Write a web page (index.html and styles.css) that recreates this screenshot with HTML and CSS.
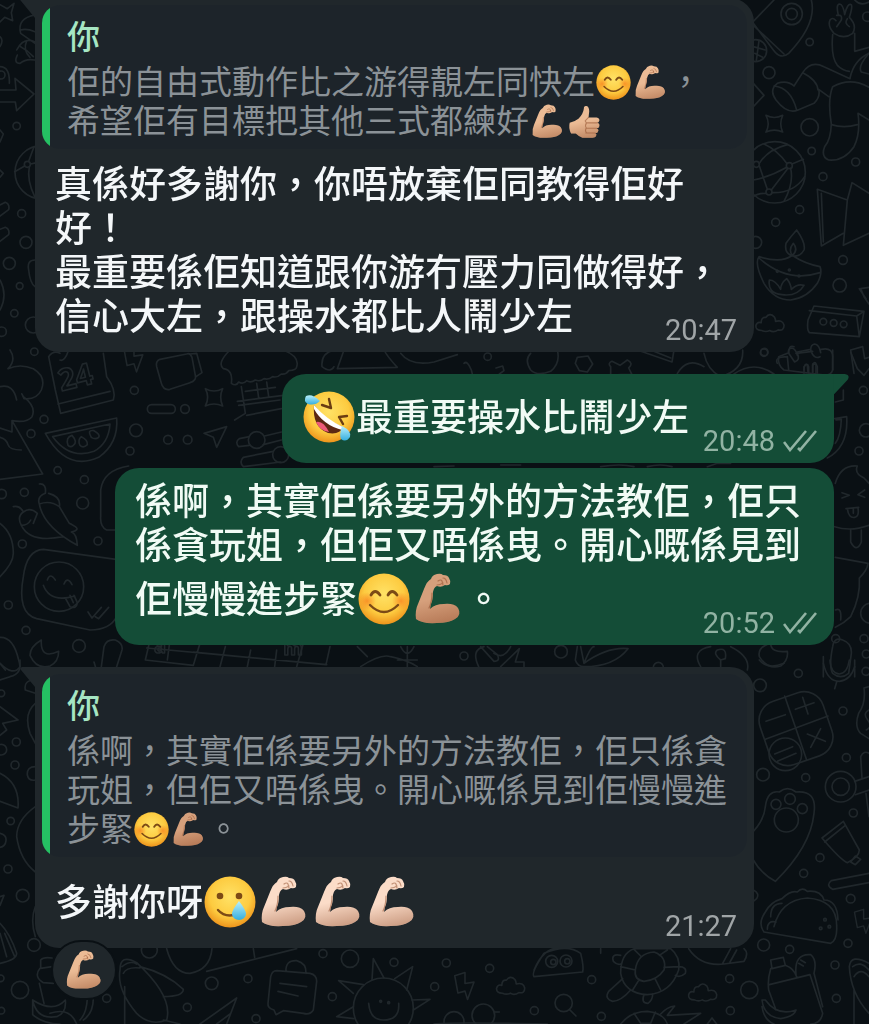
FILE: index.html
```html
<!DOCTYPE html>
<html lang="zh-Hant-HK">
<head>
  <meta charset="UTF-8" />
  <meta name="viewport" content="width=device-width, initial-scale=1" />
  <title>Chat</title>
  <link rel="stylesheet" href="styles.css">
</head>
<body>
  <!-- emoji and icon symbols -->
  <svg class="defs" width="0" height="0" aria-hidden="true">
    <defs>
      <radialGradient id="face" cx="0.5" cy="0.4" r="0.6">
        <stop offset="0" stop-color="#ffe266" />
        <stop offset="0.65" stop-color="#fdcb40" />
        <stop offset="1" stop-color="#ee941c" />
      </radialGradient>
      <radialGradient id="blush">
        <stop offset="0" stop-color="#f77a1c" stop-opacity="0.7" />
        <stop offset="1" stop-color="#f77a1c" stop-opacity="0" />
      </radialGradient>
      <linearGradient id="tear" x1="0" y1="0" x2="0" y2="1">
        <stop offset="0" stop-color="#b9f0fb" />
        <stop offset="1" stop-color="#35aede" />
      </linearGradient>
      <linearGradient id="shade" x1="0.3" y1="0" x2="0.5" y2="1">
        <stop offset="0.5" stop-color="#8a4524" stop-opacity="0" />
        <stop offset="1" stop-color="#8a4524" stop-opacity="0.4" />
      </linearGradient>
    </defs>
    <symbol id="smile" viewBox="0 0 52 52">
      <circle cx="26" cy="26" r="25.5" fill="url(#face)" />
      <circle cx="9" cy="28" r="9" fill="url(#blush)" />
      <circle cx="43" cy="28" r="9" fill="url(#blush)" />
      <path d="M13 22q4-7 9 0M30 22q4-7 9 0" fill="none" stroke="#7c4a16" stroke-width="2.8" stroke-linecap="round" />
      <path d="M12 32q14 14 28 0" fill="none" stroke="#7c4a16" stroke-width="2.4" stroke-linecap="round" />
    </symbol>
    <symbol id="rofl" viewBox="0 0 52 52">
      <circle cx="26" cy="26" r="25.5" fill="url(#face)" />
      <path d="M19 14l9 3-2-9M44 25l-8 1 4 7" fill="none" stroke="#6b3d12" stroke-width="2.4" stroke-linecap="round" stroke-linejoin="round" />
      <path d="M11 14Q23 30 40 36Q37 44 25 42Q9 36 11 14z" fill="#5c2813" />
      <path d="M13 31q7-2 13 10q-9-1-13-10z" fill="#ee5b78" />
      <path d="M11 14Q23 28 40 36l-1 3Q20 34 11 18z" fill="#fff" />
      <path d="M17 10Q12 15 5 13Q0 10 3 5Q9 2 17 10z" fill="url(#tear)" />
      <path d="M39 35Q49 40 47 46Q43 52 38 48Q36 44 39 35z" fill="url(#tear)" />
    </symbol>
    <symbol id="teary" viewBox="0 0 52 52">
      <circle cx="26" cy="26" r="25.5" fill="url(#face)" />
      <circle cx="16" cy="20" r="3.3" fill="#7c4a16" />
      <circle cx="35" cy="20" r="3.3" fill="#7c4a16" />
      <path d="M14 34q6 7 16 5" fill="none" stroke="#7c4a16" stroke-width="2.4" stroke-linecap="round" />
      <path d="M35 25q7 9 7 13a7 6 0 0 1-14 0q0-4 7-13z" fill="url(#tear)" />
    </symbol>
    <symbol id="biceps" viewBox="0 0 52 52">
      <path d="M4 46Q3 37 6 31L12 16Q15 8 19 6Q20 2 25 1Q29 0 31 2Q36 2 37 5Q39 8 38 11Q36 13 33 12Q29 15 25 13Q22 14 21 19Q21 27 19 31L18 36Q23 31 32 31Q42 30 46 35Q50 42 43 46Q37 50 25 50Q10 51 4 46z" fill="currentColor" />
      <path d="M4 46Q3 37 6 31L12 16Q15 8 19 6Q20 2 25 1Q29 0 31 2Q36 2 37 5Q39 8 38 11Q36 13 33 12Q29 15 25 13Q22 14 21 19Q21 27 19 31L18 36Q23 31 32 31Q42 30 46 35Q50 42 43 46Q37 50 25 50Q10 51 4 46z" fill="url(#shade)" />
      <path d="M26 8q3-2 4 0l1 4M31 5q3 0 4 5M25 12q3 0 6-2M20 20q0 9-3 15" fill="none" stroke="#8a4524" stroke-opacity="0.5" stroke-width="1.2" stroke-linecap="round" />
    </symbol>
    <symbol id="thumb" viewBox="0 0 52 52">
      <path d="M4 28Q12 26 17 22Q24 15 25 7Q25 2 29 3Q33 4 33 11L32 20H44Q49 21 48 25Q47 28 45 28Q49 29 48 33Q48 36 44 36Q48 38 46 41Q45 44 42 43Q45 45 43 48Q42 50 38 50H23Q17 48 13 44H6Q2 36 4 28z" fill="currentColor" />
      <path d="M4 28Q12 26 17 22Q24 15 25 7Q25 2 29 3Q33 4 33 11L32 20H44Q49 21 48 25Q47 28 45 28Q49 29 48 33Q48 36 44 36Q48 38 46 41Q45 44 42 43Q45 45 43 48Q42 50 38 50H23Q17 48 13 44H6Q2 36 4 28z" fill="url(#shade)" />
      <path d="M32 20l-5 5M29 28h16M28 36h16M28 43h14M29 23q-3 3 0 5q-3 4 0 8q-3 3 0 7" fill="none" stroke="#8a4524" stroke-opacity="0.5" stroke-width="1.6" stroke-linecap="round" />
    </symbol>
    <symbol id="ticks" viewBox="0 0 34 22">
      <path d="M1 12l6 8L23 1M15 18l2 2L33 1" fill="none" stroke="currentColor" stroke-width="2.6" />
    </symbol>
    <symbol id="tail-left" viewBox="0 0 16 20">
      <path d="M16 0H2Q-1 1 1 3L15 20H16z" fill="currentColor" />
    </symbol>
    <symbol id="tail-right" viewBox="0 0 16 21">
      <path d="M0 0H12Q18 1 15 6L1 21H0z" fill="currentColor" />
    </symbol>
    <symbol id="bolt" viewBox="0 0 70 100" overflow="visible">
      <path d="M4 18L36 8 36 42 64 38 44 92 36 66 14 72z" />
    </symbol>
    <symbol id="cloud" viewBox="0 0 100 70" overflow="visible">
      <path d="M24 56Q4 56 6 40Q10 28 22 32Q22 14 36 16Q48 0 62 14Q66 20 66 28Q88 22 92 40Q92 58 74 54Q60 64 48 56Q36 62 24 56z" />
    </symbol>
    <symbol id="spark" viewBox="0 0 60 60" overflow="visible">
      <path d="M4 4Q30 18 56 4Q44 30 56 56Q30 44 4 56Q18 30 4 4z" />
    </symbol>
  </svg>

  <!-- wallpaper doodles -->
  <svg class="wallpaper" viewBox="0 0 2607 3072" preserveAspectRatio="xMidYMin slice" aria-hidden="true">
    <!-- left edge, top -->
    <g>
      <path d="M0 14L22 26 42 10 34 38 38 62 14 52 0 66" />
      <path d="M105 45Q50 55 62 100L105 130M62 90Q80 85 105 95M50 150Q70 110 104 125M52 165Q40 190 60 190Q78 175 104 180M62 140q20 10 38 30M80 122q-12 30 10 50" />
      <path d="M0 200Q30 200 28 250M0 110Q12 120 0 140M0 270H48L45 235 102 282 50 332 46 306H0" />
      <circle cx="3" cy="225" r="12" />
      <path d="M0 390l10 12-10 24M0 510l10 10-10 12" />
      <circle cx="50" cy="378" r="11" />
      <circle cx="125" cy="517" r="80" />
      <circle cx="82" cy="493" r="9" />
      <path d="M74 498L44 515M86 484L102 440M88 500Q80 540 104 590M92 492L110 488" />
      <path d="M0 615l16-8q14 6 10 22L0 648M0 688l16-6q14 6 10 22L0 724" />
      <circle cx="65" cy="641" r="12" /><circle cx="78" cy="727" r="18" />
      <circle cx="28" cy="790" r="18" /><circle cx="59" cy="858" r="10" />
      <circle cx="43" cy="940" r="11" /><circle cx="5" cy="995" r="14" />
      <circle cx="103" cy="1055" r="11" /><circle cx="100" cy="975" r="24" />
      <path d="M0 840Q24 885 0 930M105 780Q80 780 86 810Q90 850 105 860" />
    </g>
    <!-- right edge, top -->
    <g transform="translate(1302 0)">
      <path d="M958 64L1020 0M958 70L1018 150Q1040 180 1064 160Q1150 70 1132 0M958 76L1050 162" />
      <circle cx="1073" cy="42" r="32" /><circle cx="1073" cy="42" r="17" />
      <circle cx="965" cy="152" r="33" /><path d="M958 140l36 10M962 160l24 12M975 122l-8 60" />
      <circle cx="1127" cy="126" r="11" /><circle cx="1005" cy="218" r="18" />
      <path d="M1213 46Q1205 12 1217 12Q1228 14 1232 44Q1240 8 1252 14Q1256 22 1246 52Q1270 76 1256 100Q1230 120 1200 100Q1180 78 1188 60Q1196 50 1206 62M1208 46q18-4 14 14l-14 20M1240 56q-10 14 6 24M1196 104Q1190 170 1210 196Q1226 212 1246 214M1262 100L1262 154L1305 142M1248 234Q1260 180 1305 160" />
      <path d="M1248 236L1170 200Q1130 180 1106 218L1080 258Q1060 240 1030 250Q1004 270 1026 300Q1060 344 1092 330L1140 310Q1160 290 1154 268L1184 290M1106 218Q1150 240 1152 270M1020 258Q1070 262 1088 330M1305 262Q1250 230 1196 260Q1180 300 1192 372Q1190 420 1172 440Q1160 470 1184 480Q1230 484 1260 440Q1280 400 1272 340L1305 360M1192 374Q1230 386 1270 374M1305 160Q1270 200 1282 216L1305 222" />
      <circle cx="1300" cy="50" r="14" /><path d="M1262 0Q1280 20 1305 6M958 320L990 286 958 250" />
      <use href="#spark" x="992" y="342" width="58" height="58" />
      <circle cx="1127" cy="382" r="26" /><circle cx="1133" cy="453" r="11" />
      <circle cx="1265" cy="486" r="12" /><circle cx="1167" cy="530" r="12" />
      <circle cx="1097" cy="629" r="12" /><circle cx="1025" cy="667" r="12" />
      <circle cx="1022" cy="517" r="92" />
      <circle cx="1066" cy="497" r="9" /><circle cx="1005" cy="576" r="9" /><circle cx="967" cy="493" r="9" />
      <path d="M976 490Q1000 450 1060 434M976 498L1000 568M1074 492L1108 478M1062 505L1012 570M1058 490Q1030 450 990 432M958 540Q1010 530 1058 502M1014 578Q1080 580 1112 530M996 580Q970 580 958 590M1070 505Q1080 550 1050 604" />
      <path d="M1150 568L1240 600 1228 736 1305 700M1150 568L1162 738 1228 700M1162 580L1168 726M1240 600L1254 548 1305 580" />
      <path d="M1075 768Q1050 760 1056 730Q1070 710 1088 690Q1116 730 1110 750Q1100 770 1075 768zM1075 766Q1062 750 1078 730Q1094 750 1075 766M1072 768Q1040 790 975 770Q960 790 990 850Q1020 900 1070 900Q1120 894 1150 850Q1166 820 1158 800Q1110 790 1078 768M975 774Q1060 850 1158 818M1006 840Q1000 880 1044 884Q1090 890 1110 856Q1090 850 1072 868Q1070 850 1058 836Q1040 850 1040 868Q1024 840 1006 840z" />
      <circle cx="1030" cy="814" r="3" /><circle cx="1066" cy="810" r="3" /><circle cx="1095" cy="828" r="3" />
      <circle cx="965" cy="727" r="18" /><circle cx="1227" cy="780" r="13" /><circle cx="1217" cy="856" r="20" />
      <use href="#cloud" x="960" y="936" width="98" height="70" />
      <path d="M1140 918L1290 934 1276 1010 1126 998Q1118 990 1122 960zM1126 932L1268 948 1276 1010M1268 948L1290 934" />
      <circle cx="1168" cy="965" r="10" /><circle cx="1199" cy="969" r="10" /><circle cx="1229" cy="973" r="10" />
      <path d="M1305 862L1280 866 1290 890 1305 912M1276 866l20 30" />
      <circle cx="991" cy="1056" r="11" />
      <path d="M1064 1060q-4-14 10-16q12 4 16 22M1090 1056l40-8M1130 1050q0-16 12-18q14 2 18 26M1090 1060Q1100 1080 1082 1086L1064 1060M1162 1048Q1200 1040 1196 1080V1110Q1190 1130 1160 1124L1050 1110Q1030 1096 1034 1070L1064 1058M1110 1110q0-20 10-16l2 24M1136 1116v-24q8-8 10 0v26" />
      <path d="M1250 1050l36-10 6 36 13-4M1250 1050l10 70" />
    </g>
    <!-- left, middle -->
    <g transform="translate(0 1050)">
      <path d="M30 0Q50 30 24 56Q60 40 100 56Q140 80 124 120Q110 150 72 146Q60 120 70 140Q110 170 96 200Q80 220 36 212L128 372L0 388M0 110Q40 100 50 150M36 212V246L0 234M0 262q20 6 24 22t40 16" />
      <path d="M146 20L166 120 182 190 340 150Q350 120 320 80L310 10M146 20Q160 0 180 10M174 162L330 124M180 30q14 6 26-30" />
      <text class="doodle-text" x="184" y="124" font-size="90" transform="rotate(-14 184 124)">24</text>
      <use href="#bolt" x="368" y="-22" width="66" height="96" />
      <path d="M470 50Q466 34 480 28L560 12Q570 8 576 22L586 76Q590 92 570 98L510 118Q490 122 484 100zM570 12L590 10 606 68 588 80" />
      <circle cx="403" cy="121" r="12" /><circle cx="132" cy="208" r="12" /><circle cx="93" cy="251" r="12" />
      <rect x="442" y="164" width="84" height="26" rx="13" /><circle cx="555" cy="177" r="13" />
      <use href="#spark" x="612" y="112" width="60" height="60" />
      <path d="M136 250L350 204Q356 280 296 322Q200 366 136 250zM158 260L330 222Q326 280 282 304Q210 330 158 260M204 286q-8-24 12-30q18 20 4 30q-8 8-16 0zM240 286q-8-16 4-26q20 10 18 24q-12 12-22 2zM274 262q-14-24 8-20q20 12 14 20q-10 8-22 0z" />
      <circle cx="408" cy="241" r="19" /><circle cx="504" cy="269" r="13" /><circle cx="563" cy="269" r="13" />
      <path d="M612 250L680 230 650 292 640 262z" />
      <circle cx="390" cy="303" r="12" /><circle cx="173" cy="361" r="11" /><circle cx="253" cy="389" r="12" />
      <path d="M690 0Q650 40 670 56Q700 60 694 100q14 10 22-4q14 8 24-4q12 8 26-2q14 6 26-4q14 4 26-6q14 4 26-8q14 2 22-10q24-2 24-12Q900 20 850 0M712 154L850 136M716 166L840 150M724 110l12 80L704 210M740 196L844 176M770 100l6 44M800 96l6 44M736 124l90-12" />
      <circle cx="770" cy="270" r="25" /><path d="M748 260L718 266Q704 276 716 290L748 286M794 258L844 246M790 284L844 270M820 304L730 322Q716 336 730 350L842 336" /><circle cx="842" cy="314" r="24" />
      <circle cx="73" cy="427" r="12" /><circle cx="248" cy="459" r="18" /><circle cx="294" cy="573" r="12" /><circle cx="67" cy="582" r="12" />
      <circle cx="5" cy="432" r="14" />
      <path d="M118 402Q140 400 136 430Q110 440 118 462Q150 450 178 470Q184 440 146 430M118 462Q130 530 232 586Q230 550 214 546Q240 540 226 530Q210 520 208 520Q190 490 178 470M40 470Q60 466 70 486Q50 500 64 526Q90 580 190 560M70 486Q90 470 112 490L100 520M64 526q20 0 28-16" />
      <path d="M350 540H320Q300 530 302 500V420Q310 360 386 348M0 520Q40 550 40 610Q40 640 0 680" />
      <path d="M348 628L130 598Q80 600 70 680Q50 790 110 806L270 840Q330 840 350 800" />
      <circle cx="177" cy="710" r="74" />
      <path d="M142 690q8-24 24 0M192 702q10-24 24 2M130 706Q150 760 224 738M196 744l14 26q20 8 22-12l-10-22M210 736l10 22M264 786l12 18 28-32M286 800l10 6 30-34" />
      <circle cx="25" cy="765" r="12" /><circle cx="78" cy="841" r="12" /><circle cx="237" cy="888" r="19" />
      <path d="M124 870Q90 890 90 916Q110 960 150 948Q176 936 176 904Q120 930 124 870zM0 862Q40 860 56 930Q70 970 30 980L0 990M0 940l16 20" />
      <path d="M304 950L312 890Q320 866 346 870Q370 880 366 900L350 950M282 936l6 20M450 870L436 930 580 946M510 870l-8 60M600 880L580 946M676 890L660 950M752 900L742 950M830 900L824 950M910 880L890 950M990 890L978 944L580 906M440 894L980 944" />
      <text class="doodle-text" x="462" y="910" font-size="60">a</text>
      <text class="doodle-text" x="850" y="916" font-size="60">m</text>
    </g>
    <!-- right, middle -->
    <g transform="translate(1302 1050)">
      <path d="M-300 0Q-340 10-336 50Q-310 70-300 50M-290 56L-270 0M-290 56L-110 52Q-140 20-150 0M-100 10Q-70 50 0 36L70 14M90 40Q100 30 112 60L116 76M186 54l20-6 4 14-14 10M290 10Q270 30 290 60Q310 80 350 64Q380 40 370 0M430 22L462 18 476 42 460 66 436 62 424 40zM530 50Q520 40 534 34L558 46L580 30Q600 40 584 54L594 74H560L530 76zM610 0L714 36L720 0M650 0l60 24" />
      <circle cx="161" cy="20" r="11" /><circle cx="990" cy="8" r="11" />
      <path d="M730 70Q760 20 810 50M810 10Q820 60 860 80Q930 60 926 0M900 72Q960 30 1020 72M1030 40Q1020 20 1060 20L1064 60M1064 10q0-26 16-20M1086 10l50-6M1130 0q10 30 28 20M1196 0V60M1110 70V50q10-14 14 0v20M1136 70V46q10-10 14 4v20" />
      <circle cx="1288" cy="121" r="12" /><circle cx="1296" cy="241" r="20" /><circle cx="1275" cy="303" r="12" />
      <path d="M1250 6l20 50 20 20 15-20M1204 156l24-6V120M1202 206L1238 200Q1244 290 1180 324M1206 210L1222 208Q1220 260 1204 280" />
      <path d="M1204 400Q1220 344 1270 348Q1260 370 1290 384L1305 400M1202 530Q1250 546 1305 526M1250 540V576Q1268 610 1282 576V540M1224 428l22 8-22 8M1292 420l-20 14 20 8M1236 476l38-4M1240 476Q1244 506 1262 502Q1276 500 1272 474M1258 474v16" />
      <path d="M1204 622L1302 640M1302 640Q1300 660 1276 684Q1280 740 1250 800Q1230 820 1204 832M1204 780q20-10 16 30" />
      <circle cx="1310" cy="790" r="30" />
      <circle cx="90" cy="918" r="12" /><circle cx="381" cy="905" r="19" /><circle cx="673" cy="952" r="15" /><circle cx="1205" cy="866" r="12" /><circle cx="1290" cy="866" r="12" />
      <path d="M150 890Q110 900 134 950M140 890l40 44q20 0 10-20l-30-24M180 910q30 20 50-20M200 950L256 896 244 936H270V950M430 890L424 930Q430 950 450 950Q540 950 582 896Q520 890 450 940Q470 890 480 890M440 890L450 940M800 950Q770 900 830 890M860 950V930Q836 910 850 900Q880 890 874 926L860 930M890 890Q950 920 940 960" />
      <path d="M1010 880Q970 890 976 920Q1000 960 1040 948Q1064 930 1060 904Q1010 910 1010 880zM1196 890Q1200 860 1226 870Q1254 880 1252 910L1244 970Q1220 990 1196 970Q1184 950 1196 890zM1168 920V980M1262 930V980" />
      <circle cx="1297" cy="912" r="12" />
      <path d="M-230 890L-200 920M-220 950Q-160 910-130 920Q-80 930-50 950M-100 890q20 40 40 0M-80 890v60M-110 930h60" />
      <path d="M0 350l60-2M500 350q60-10 100 0M640 350q40-10 74 0M820 350l30-10h40M200 345h60" />
    </g>
    <!-- left, bottom -->
    <g transform="translate(0 1980)">
      <path d="M0 10Q40 50 60 20V0M0 140L54 180 8 190 20 210 0 226M106 60Q70 60 76 90L106 100" />
      <circle cx="4" cy="100" r="10" /><circle cx="49" cy="246" r="12" /><circle cx="4" cy="269" r="16" /><circle cx="45" cy="315" r="12" />
      <path d="M106 130Q70 160 90 220L106 250M106 320Q80 320 82 345Q86 364 106 360M0 340Q60 370 54 444L0 424M106 440Q50 480 50 530Q60 600 106 636M0 520q20 4 18 22t-18 20" />
      <circle cx="32" cy="483" r="11" /><circle cx="24" cy="627" r="12" /><circle cx="68" cy="707" r="19" /><circle cx="102" cy="855" r="19" />
      <path d="M0 710L12 706 0 736M106 740Q90 780 106 830M0 790Q30 820 50 880Q50 900 0 910M0 820L20 890M14 820L44 890" />
      <circle cx="60" cy="990" r="26" /><circle cx="2" cy="955" r="10" /><circle cx="4" cy="1052" r="10" /><circle cx="320" cy="1015" r="12" />
      <path d="M122 900Q130 890 156 894M122 900V925L156 920M120 925Q100 950 130 968L160 970M118 970L132 1030M98 1020Q110 1080 170 1070Q200 1060 196 1020Q160 1060 98 1020zM98 1020V1064Q130 1092 180 1092M150 1060Q210 1040 230 1092M262 1015Q260 1060 240 1080M280 1015Q280 1060 250 1080" />
      <path d="M360 930Q360 880 410 908Q520 1010 500 1080Q450 1100 410 1060Q350 990 360 930zM366 920Q390 900 410 912M370 940Q380 920 420 924M420 920Q500 940 550 988Q550 1010 490 1010M374 980V1092M490 1080l50 12" />
      <circle cx="448" cy="870" r="24" /><circle cx="635" cy="970" r="19" /><circle cx="744" cy="956" r="12" /><circle cx="562" cy="1042" r="12" />
      <path d="M500 866Q520 940 570 940Q630 930 636 866M620 934L890 866M760 866l4 26M600 1092L710 1014 680 1092M650 1092l40-30" />
      <path d="M830 932L930 940Q950 944 950 964L940 1050Q930 1066 910 1060L850 1052 828 1064 822 1050Q802 1044 804 1030L812 950Q816 932 830 932zM858 934Q856 900 890 902Q920 910 918 940M840 970l80 10M834 994l60 14" />
      <circle cx="969" cy="881" r="12" /><circle cx="1050" cy="896" r="26" /><circle cx="1182" cy="907" r="12" /><circle cx="997" cy="1010" r="12" /><circle cx="768" cy="1076" r="12" />
      <circle cx="1150" cy="1044" r="90" />
      <path d="M1116 960L1120 896 1152 954M1184 956L1238 920 1220 990M1060 1000L1016 962 1090 974M1236 1020L1290 1018 1240 1050M1060 1040L1010 1070 1062 1076M1106 1030Q1110 1080 1150 1080Q1200 1080 1196 1030" />
      <circle cx="1142" cy="1024" r="3" /><circle cx="1166" cy="1028" r="3" />
    </g>
    <!-- right, bottom -->
    <g transform="translate(1302 1980)">
      <circle cx="978" cy="76" r="19" /><circle cx="1093" cy="40" r="12" /><circle cx="1227" cy="153" r="12" /><circle cx="1296" cy="34" r="12" />
      <path d="M1168 10Q1180 64 1216 64Q1250 60 1262 20M1208 66l-6 20M1188 0Q1190 40 1216 42Q1240 40 1246 0M976 0Q1000 30 1050 10" />
      <rect x="986" y="106" width="200" height="200" rx="60" transform="rotate(-19 1086 206)" />
      <path d="M1052 108L1118 300M994 238L1182 168M996 184l58-20M1084 148l56-20M1106 112l16 50M1120 222l54 22M1160 206l-30 56M1022 282l54-22M1030 304l56-24" />
      <circle cx="1054" cy="283" r="49" />
      <circle cx="1237" cy="293" r="12" /><circle cx="1115" cy="353" r="12" /><circle cx="987" cy="344" r="19" />
      <path d="M1305 80L1290 84Q1296 130 1274 160Q1260 200 1280 220L1305 236M1305 150q-20 10-4 30t-4 30" />
      <circle cx="1220" cy="380" r="46" /><circle cx="1220" cy="380" r="26" /><path d="M1262 364L1305 350M1264 404L1305 390M1284 354L1280 290Q1290 270 1305 280M1296 400L1305 470" />
      <path d="M958 514Q990 480 994 440Q1000 390 1036 396Q1060 376 1086 396Q1150 390 1140 460Q1130 560 1024 664Q980 640 958 600" />
      <circle cx="1026" cy="433" r="15" /><circle cx="1068" cy="417" r="16" /><circle cx="1105" cy="446" r="15" /><circle cx="1057" cy="480" r="36" />
      <path d="M1164 534L1228 484 1276 570Q1276 590 1240 608Q1220 600 1164 534zM1172 546L1234 496M1250 606L1264 588 1280 598 1264 614z" />
      <circle cx="1258" cy="459" r="12" /><circle cx="1158" cy="593" r="12" /><circle cx="1109" cy="640" r="12" /><circle cx="1250" cy="716" r="13" />
      <path d="M1305 640L1192 662Q1174 676 1196 688L1305 668M958 690q20 10 10 26l-10 8" />
      <path d="M1020 800Q1040 720 1120 714Q1210 720 1208 800Q1210 840 1190 850L990 816Q970 790 994 756Q1010 726 1044 716Q1070 690 1090 696Q1104 680 1120 694Q1160 690 1170 720Q1210 720 1212 780M1000 808Q1000 780 1026 786M1010 770Q1010 730 1044 730" />
      <circle cx="1173" cy="779" r="4" /><circle cx="1160" cy="805" r="4" /><circle cx="1186" cy="800" r="4" />
      <circle cx="989" cy="855" r="18" /><circle cx="1067" cy="868" r="12" /><circle cx="1242" cy="850" r="12" /><circle cx="1203" cy="915" r="12" />
      <use href="#bolt" x="1258" y="740" width="60" height="88" />
      <path d="M764 866Q800 920 870 912L930 904Q946 880 930 866M890 866l-24 44M908 870l-20 36" />
      <path d="M300 950Q290 940 330 880Q400 850 440 880Q450 920 446 936zM300 930Q330 860 380 864" />
      <circle cx="353" cy="904" r="18" /><circle cx="396" cy="903" r="18" /><circle cx="358" cy="906" r="8" /><circle cx="400" cy="904" r="8" />
      <circle cx="37" cy="909" r="12" /><circle cx="167" cy="925" r="12" /><circle cx="2" cy="980" r="12" /><circle cx="473" cy="959" r="12" /><circle cx="301" cy="1052" r="12" /><circle cx="502" cy="1069" r="12" />
      <use href="#bolt" x="58" y="930" width="68" height="96" />
      <use href="#cloud" x="182" y="944" width="98" height="70" />
      <circle cx="389" cy="1029" r="26" /><path d="M406 1048l20 20" />
      <circle cx="60" cy="1085" r="30" /><circle cx="148" cy="1066" r="34" /><path d="M182 1056h14" />
      <path d="M560 940Q560 880 600 866H710Q740 890 734 930Q710 1000 640 1004Q570 1000 560 940zM604 930Q610 880 660 876Q700 890 690 930Q670 960 630 964Q600 960 604 930zM560 920l44 10M600 868l20 20M700 870l-24 16M734 920l-44 2M664 958l16 32M616 958l-20 32M560 886Q530 880 538 904Q550 916 560 912M734 920q26 0 20 20q-16 14-30 6M566 956L524 994Q510 1016 536 1024Q560 1024 590 990M630 1004q-10 26 12 26q14-10 14-28" />
      <use href="#cloud" x="758" y="964" width="98" height="70" />
      <circle cx="887" cy="956" r="12" /><circle cx="946" cy="990" r="26" /><circle cx="889" cy="1052" r="12" /><circle cx="1207" cy="1015" r="12" />
      <path d="M560 1092Q590 1054 640 1054Q690 1060 700 1092M600 1060l20 30h30l14-34M680 1062Q700 1040 722 1038L700 1066L800 1060L750 1092M820 1092l14-18 14 18" />
      <path d="M1010 900L1048 892 1054 916 1014 926zM1010 926Q1000 960 1004 990L1026 1050M1054 916Q1080 926 1088 950M1006 974L1128 944L1166 1060Q1160 1092 1130 1092M1140 940L1166 1040M1086 944Q1080 880 1130 884Q1150 900 1140 940M1094 910l14 8M1100 900l14 8M984 1020Q990 1070 1040 1076Q1080 1070 1086 1050Q1030 1070 994 1020zM984 1040Q990 1080 1020 1092" />
      <path d="M1305 910Q1250 880 1246 920Q1250 1000 1305 1060M1256 920Q1280 900 1305 930M1260 950Q1280 920 1305 950M1260 990V1092" />
      <path d="M0 1092q40-6 340 0M500 866v14" />
    </g>
  </svg>

  <main class="chat">
    <article class="message received first">
      <svg class="tail" aria-hidden="true"><use href="#tail-left" /></svg>
      <blockquote class="quote">
        <div class="quote-name">你</div>
        <p>佢的自由式動作比之游得靚左同快左<svg class="emoji" role="img" aria-label="😊"><use href="#smile" /></svg><svg class="emoji tan" role="img" aria-label="💪🏼"><use href="#biceps" /></svg>，<br>希望佢有目標把其他三式都練好<svg class="emoji tan" role="img" aria-label="💪🏼"><use href="#biceps" /></svg><svg class="emoji tan" role="img" aria-label="👍🏼"><use href="#thumb" /></svg></p>
      </blockquote>
      <p class="text">真係好多謝你，你唔放棄佢同教得佢好好！<br>最重要係佢知道跟你游冇壓力同做得好，信心大左，跟操水都比人鬧少左</p>
      <div class="meta"><time>20:47</time></div>
    </article>

    <article class="message sent first">
      <svg class="tail" aria-hidden="true"><use href="#tail-right" /></svg>
      <p class="text"><svg class="emoji" role="img" aria-label="🤣"><use href="#rofl" /></svg>最重要操水比鬧少左</p>
      <div class="meta"><time>20:48</time><svg class="ticks" role="img" aria-label="Delivered"><use href="#ticks" /></svg></div>
    </article>

    <article class="message sent">
      <p class="text">係啊，其實佢係要另外的方法教佢，佢只係貪玩姐，但佢又唔係曳。開心嘅係見到佢慢慢進步緊<svg class="emoji" role="img" aria-label="😊"><use href="#smile" /></svg><svg class="emoji brown" role="img" aria-label="💪🏽"><use href="#biceps" /></svg>。</p>
      <div class="meta"><time>20:52</time><svg class="ticks" role="img" aria-label="Delivered"><use href="#ticks" /></svg></div>
    </article>

    <article class="message received first">
      <svg class="tail" aria-hidden="true"><use href="#tail-left" /></svg>
      <blockquote class="quote">
        <div class="quote-name">你</div>
        <p>係啊，其實佢係要另外的方法教佢，佢只係貪玩姐，但佢又唔係曳。開心嘅係見到佢慢慢進步緊<svg class="emoji" role="img" aria-label="😊"><use href="#smile" /></svg><svg class="emoji brown" role="img" aria-label="💪🏽"><use href="#biceps" /></svg>。</p>
      </blockquote>
      <p class="text">多謝你呀<svg class="emoji" role="img" aria-label="🥲"><use href="#teary" /></svg><svg class="emoji light" role="img" aria-label="💪🏻"><use href="#biceps" /></svg><svg class="emoji light" role="img" aria-label="💪🏻"><use href="#biceps" /></svg><svg class="emoji light" role="img" aria-label="💪🏻"><use href="#biceps" /></svg></p>
      <div class="meta"><time>21:27</time></div>
    </article>
    <button class="reaction" type="button" aria-label="💪🏼"><svg class="emoji tan" aria-hidden="true"><use href="#biceps" /></svg></button>
  </main>
</body>
</html>
```

FILE: styles.css
```css
* {
  box-sizing: border-box;
}

body {
  margin: 0;
  min-height: 100vh;
  background-color: #0a1014;
  color: #f4f7f9;
  font-family: "Noto Sans CJK TC", sans-serif;
}

p,
blockquote {
  margin: 0;
}

.defs {
  position: absolute;
}

.wallpaper {
  position: fixed;
  top: 0;
  left: 0;
  width: 100%;
  height: 100%;
  fill: none;
  stroke: #20272b;
  stroke-width: 5;
  stroke-linejoin: round;
  stroke-linecap: round;
}

.doodle-text {
  font-family: "Open Sans", sans-serif;
  font-weight: 700;
}

.chat {
  position: relative;
  display: flex;
  flex-direction: column;
  align-items: flex-start;
  margin-top: -2px;
  padding: 0 35px;
}

/* bubbles */
.message {
  position: relative;
  display: flex;
  flex-direction: column;
  max-width: 90%;
  margin-top: 5px;
  padding-bottom: 7px;
  border-radius: 24px;
}

.message.first {
  margin-top: 22px;
}

.message:first-child {
  margin-top: 0;
}

.received {
  background-color: #20272b;
  color: #f4f7f9;
}

.sent {
  align-self: flex-end;
  background-color: #144d37;
  color: #f1fbf5;
}

.received.first {
  border-top-left-radius: 0;
}

.sent.first {
  border-top-right-radius: 0;
}

/* overlaps the bubble by 1px so no seam shows */
.tail {
  position: absolute;
  top: 0;
  width: 16px;
  height: 20px;
}

.received .tail {
  right: 100%;
  margin-right: -1px;
  color: #20272b;
}

.sent .tail {
  left: 100%;
  margin-left: -1px;
  color: #144d37;
}

.text {
  padding: 9px 17px 2px 20px;
  font-size: 37px;
  font-weight: 500;
  line-height: 44px;
}

.quote + .text {
  padding-top: 11px;
}

/* keeps room for the time on the last line */
.text::after {
  content: "";
  display: inline-block;
  width: 88px;
}

.sent .text::after {
  width: 128px;
}

.text .emoji {
  width: 52px;
  height: 52px;
  margin: 8px 1px 4px;
  vertical-align: -16px;
}

.meta {
  display: flex;
  align-items: center;
  align-self: flex-end;
  gap: 8px;
  margin-top: -23px;
  padding-right: 17px;
  color: #a0a5a7;
  font-family: Roboto, sans-serif;
  font-size: 29px;
  line-height: 30px;
}

.sent .meta {
  color: #91b3a3;
}

.ticks {
  width: 34px;
  height: 22px;
}

/* quoted message */
.quote {
  margin: 7px 7px 0;
  padding: 8px 10px 10px 25px;
  border-radius: 18px;
  background: linear-gradient(to right, #25c063 8px, #1d242a 8px);
  color: #8b9297;
  font-size: 33px;
  line-height: 39px;
}

.quote-name {
  margin-bottom: 4px;
  color: #a6e6c3;
  font-weight: 500;
  line-height: 44px;
}

.quote .emoji {
  width: 35px;
  height: 35px;
  margin: 0 1px;
  vertical-align: -6px;
}

.tan {
  color: #ebbb95;
}

.brown {
  color: #d6a07c;
}

.light {
  color: #fbdcc8;
}

.reaction {
  position: relative;
  display: flex;
  align-items: center;
  justify-content: center;
  width: 66px;
  height: 60px;
  margin: -8px 0 0 16px;
  padding: 0;
  border: 2px solid #0a1014;
  border-radius: 30px;
  background-color: #20272b;
  cursor: pointer;
}

.reaction .emoji {
  width: 40px;
  height: 40px;
}
```
